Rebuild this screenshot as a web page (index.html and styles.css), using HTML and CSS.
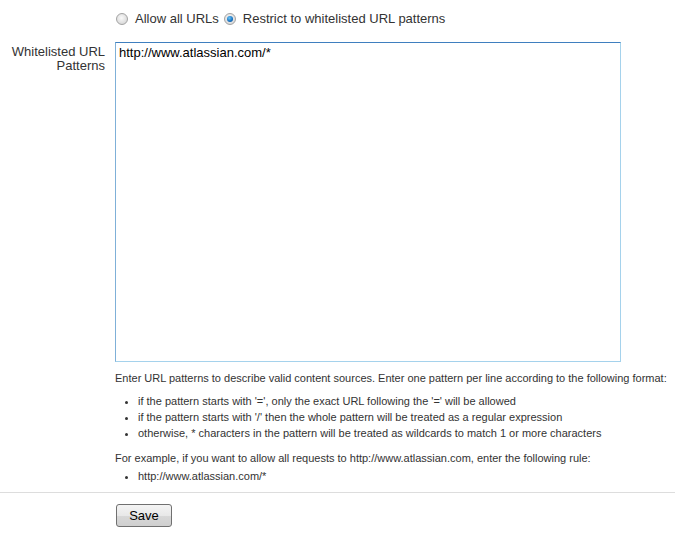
FILE: index.html
```html
<!DOCTYPE html>
<html lang="en">
<head>
  <meta charset="UTF-8">
  <title>Whitelist</title>
  <link rel="stylesheet" href="styles.css">
</head>
<body>
  <form class="whitelist">
    <div class="field">
      <div class="label"></div>
      <div class="control radios">
        <label><input type="radio" name="mode"> Allow all URLs</label>
        <label><input type="radio" name="mode" checked> Restrict to whitelisted URL patterns</label>
      </div>
    </div>

    <div class="field">
      <label class="label" for="patterns">Whitelisted URL Patterns</label>
      <div class="control">
        <textarea id="patterns">http://www.atlassian.com/*</textarea>
        <div class="help">
          <p>Enter URL patterns to describe valid content sources. Enter one pattern per line according to the following format:</p>
          <ul class="rules">
            <li>if the pattern starts with '=', only the exact URL following the '=' will be allowed</li>
            <li>if the pattern starts with '/' then the whole pattern will be treated as a regular expression</li>
            <li>otherwise, * characters in the pattern will be treated as wildcards to match 1 or more characters</li>
          </ul>
          <p class="example">For example, if you want to allow all requests to http://www.atlassian.com, enter the following rule:</p>
          <ul class="sample">
            <li>http://www.atlassian.com/*</li>
          </ul>
        </div>
      </div>
    </div>

    <div class="buttons">
      <button type="button">Save</button>
    </div>
  </form>
</body>
</html>
```

FILE: styles.css
```css
body {
  margin: 0;
  font-family: "Liberation Sans", Arial, sans-serif;
  color: #333;
  background: #fff;
}
.field {
  display: flex;
  gap: 10px;
}
.label {
  width: 105px;
  flex: none;
  text-align: right;
  font-size: 13px;
  line-height: 14px;
  padding-top: 3px;
  color: #333;
}
.field:first-child .label {
  padding-top: 0;
}
.radios {
  display: flex;
  align-items: flex-start;
  gap: 4px;
  padding-top: 11px;
  font-size: 13px;
  line-height: 16px;
  height: 31px;
}
.radios label {
  display: flex;
  align-items: center;
  gap: 7px;
}
.radios input {
  appearance: none;
  margin: 0 0 0 1px;
  width: 12px;
  height: 12px;
  border-radius: 50%;
  border: 1px solid #a3a3a3;
  background: radial-gradient(circle at 45% 40%, #fafafa 0, #e2e2e2 55%, #cfcfcf 100%);
  position: relative;
}
.radios input:checked::before {
  content: "";
  position: absolute;
  width: 6px;
  height: 6px;
  top: 2px;
  left: 2px;
  border-radius: 50%;
  background: radial-gradient(circle at 40% 35%, #6cc4f5 0, #1570c0 60%, #0a4584 100%);
}
textarea {
  display: block;
  box-sizing: border-box;
  width: 506px;
  height: 320px;
  margin: 0;
  padding: 2px 3px;
  resize: none;
  font-family: "Liberation Sans", Arial, sans-serif;
  font-size: 13px;
  line-height: 15px;
  color: #000;
  border: 1px solid;
  border-color: #3f7fbf #a5d2ec #a5d2ec #7fb0d8;
  outline: none;
}
.help {
  font-size: 11px;
  line-height: 14px;
  color: #333;
}
.help p {
  margin: 9px 0 0;
}
.help ul {
  margin: 0;
  padding-left: 23px;
  list-style: disc;
}
.rules {
  padding-top: 8px;
}
.rules li {
  line-height: 16px;
}
.help p.example {
  margin-top: 10px;
}
.sample {
  padding-top: 4px;
}
.buttons {
  margin-top: 9px;
  border-top: 1px solid #ddd;
  padding: 11px 0 0 116px;
}
button {
  width: 56px;
  height: 23px;
  padding: 0;
  font-family: "Liberation Sans", Arial, sans-serif;
  font-size: 13px;
  color: #000;
  border: 1px solid #707070;
  border-radius: 3px;
  background: linear-gradient(#f4f4f4, #e8e8e8 50%, #d8d8d8 51%, #cfcfcf);
  cursor: pointer;
}
```
